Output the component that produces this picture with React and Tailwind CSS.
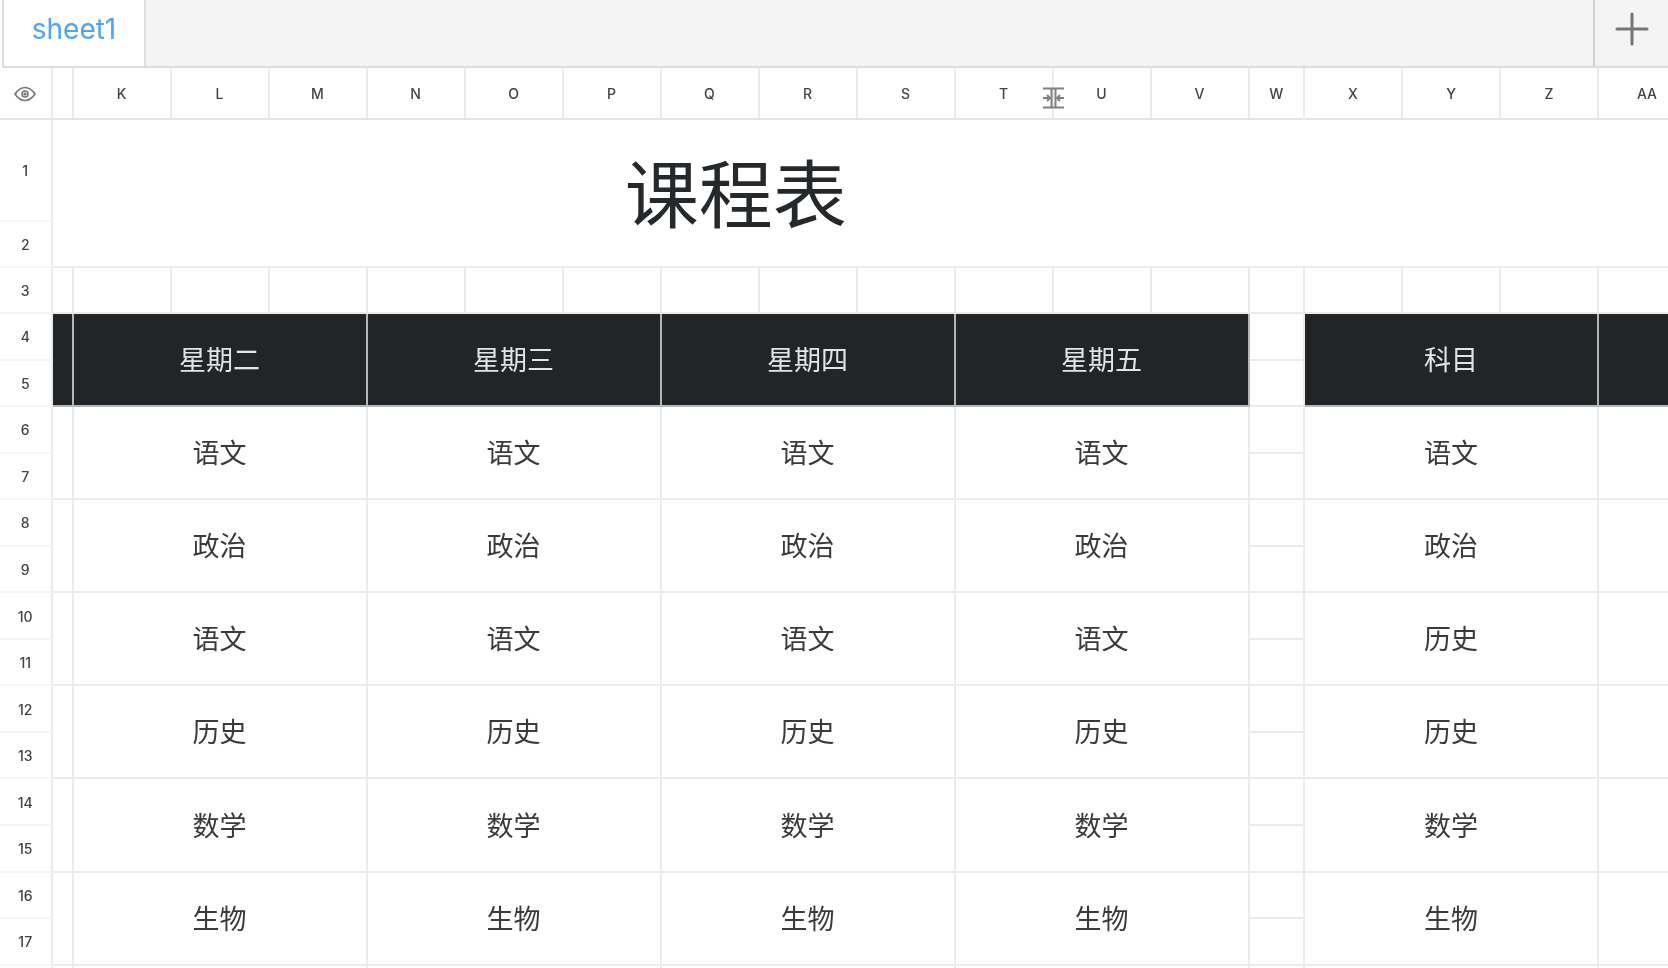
import { Fragment } from 'react';

const topCols = ['K', 'L', 'M', 'N', 'O', 'P', 'Q', 'R', 'S', 'T', 'U', 'V', 'W', 'X', 'Y', 'Z', 'AA'];
const days = ['星期二', '星期三', '星期四', '星期五'];
const lessons = [
  ['语文', '语文'],
  ['政治', '政治'],
  ['语文', '历史'],
  ['历史', '历史'],
  ['数学', '数学'],
  ['生物', '生物'],
];

const gridCols = 'grid grid-cols-[52.500px_21px_repeat(12,98px)_55.500px_repeat(3,98px)_98px]';
const line = 'border-[#ebebeb]';
const cjkCell = 'flex items-center justify-center pt-[2px] text-[27px] leading-none';

function RowNum({ n }) {
  return (
    <div className="flex items-center justify-center border-r-2 border-b-2 border-r-[#ebebeb] border-b-[#f5f5f5] pt-[1px] text-[14px] font-medium text-[#444]">
      {n}
    </div>
  );
}

function HeadCell({ text, span = 'col-span-3' }) {
  return (
    <div className={`${span} row-span-2 ${cjkCell} bg-[#212528] border-r-2 border-b-2 border-[#b4b6b7] text-[#e3e3e3]`}>
      {text}
    </div>
  );
}

function LessonCell({ text }) {
  return (
    <div className={`col-span-3 row-span-2 ${cjkCell} border-r-2 border-b-2 ${line} text-[#3a3a3a]`}>
      {text}
    </div>
  );
}

function EyeIcon() {
  return (
    <svg width="22" height="16" viewBox="0 0 22 16" fill="none" stroke="#777" strokeWidth="1.6">
      <path d="M1 8C4 3.6 7.4 1.5 11 1.5S18 3.6 21 8c-3 4.4-6.4 6.5-10 6.5S4 12.400 1 8Z" />
      <circle cx="11" cy="8" r="3" />
      <circle cx="11" cy="8" r="0.8" fill="#777" />
    </svg>
  );
}

function ResizeCursor() {
  return (
    <svg className="absolute left-[1042px] top-[87px]" width="23" height="22" viewBox="0 0 23 22" fill="none" stroke="#808080" strokeWidth="2">
      <path d="M1 1.500h21M1 20.500h21M9.500 1.500v19M13.500 1.500v19" />
      <path d="M1 11h6M5 8 8 11l-3 3M22 11h-6M18 8l-3 3 3 3" />
    </svg>
  );
}

export default function App() {
  return (
    <div className="relative h-[968px] w-[1668px] overflow-hidden bg-white font-['Inter','Noto_Sans_CJK_SC',sans-serif] blur-[0.4px]">
      {/* Sheet tabs */}
      <div className="ml-[2px] flex h-[68px] border-b-2 border-[#dedede] bg-[#f4f4f4]">
        <div className="flex w-[144px] items-center justify-center border-x-2 border-[#dedede] bg-white pb-[9px] text-[28px] text-[#4da3f7]">
          sheet1
        </div>
        <div className="ml-auto flex w-[75px] items-center justify-center border-l-2 border-[#cfcfcf] pb-[9px]">
          <svg width="34" height="34" viewBox="0 0 34 34" stroke="#757575" strokeWidth="3" strokeLinecap="round">
            <path d="M17 2v30M2 17h30" />
          </svg>
        </div>
      </div>

      {/* Column letters */}
      <div className={`${gridCols} h-[52px] border-b-2 border-[#e6e6e6]`}>
        <div className="flex items-center justify-center border-r-2 border-[#ebebeb] pt-[1px]">
          <EyeIcon />
        </div>
        <div className={`border-r-2 ${line}`} />
        {topCols.map((col) => (
          <div key={col} className={`flex items-center justify-center border-r-2 pt-[1px] text-[14px] font-medium text-[#444] ${line}`}>
            {col}
          </div>
        ))}
      </div>

      {/* Sheet body */}
      <div className={`${gridCols} grid-rows-[102px_46px_46px_repeat(14,46.55px)_12px]`}>
        <RowNum n={1} />
        <div className={`row-span-2 border-b-2 ${line}`} />
        <div className={`col-span-14 row-span-2 ${line} flex items-center justify-center border-b-2 pt-[3px] pr-[5px] text-[74px] leading-none text-[#26292b]`}>
          课程表
        </div>
        <div className={`col-span-3 row-span-2 border-b-2 ${line}`} />
        <RowNum n={2} />

        <RowNum n={3} />
        <div className={`border-r-2 border-b-2 ${line}`} />
        {topCols.map((col) => (
          <div key={col} className={`border-r-2 border-b-2 ${line}`} />
        ))}

        <RowNum n={4} />
        <HeadCell text="" span="col-span-1" />
        {days.map((day) => (
          <HeadCell key={day} text={day} />
        ))}
        <div className={`border-r-2 border-b-2 ${line}`} />
        <HeadCell text="科目" />
        <HeadCell text="" span="col-span-1" />
        <RowNum n={5} />
        <div className={`border-r-2 border-b-2 ${line}`} />

        {lessons.map(([weekday, subject], i) => (
          <Fragment key={i}>
            <RowNum n={6 + i * 2} />
            <div className={`row-span-2 border-r-2 border-b-2 ${line}`} />
            {days.map((day) => (
              <LessonCell key={day} text={weekday} />
            ))}
            <div className={`border-r-2 border-b-2 ${line}`} />
            <LessonCell text={subject} />
            <div className={`row-span-2 border-r-2 border-b-2 ${line}`} />
            <RowNum n={7 + i * 2} />
            <div className={`border-r-2 border-b-2 ${line}`} />
          </Fragment>
        ))}

        <div className={`border-r-2 ${line}`} />
        <div className={`border-r-2 ${line}`} />
        {days.map((day) => (
          <div key={day} className={`col-span-3 border-r-2 ${line}`} />
        ))}
        <div className={`border-r-2 ${line}`} />
        <div className={`col-span-3 border-r-2 ${line}`} />
      </div>

      <ResizeCursor />
    </div>
  );
}
